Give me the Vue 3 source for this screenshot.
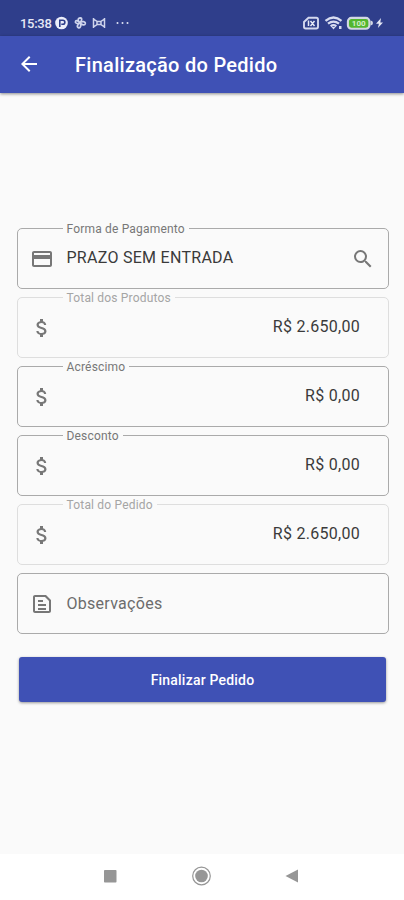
<script setup>
const fields = [
  { label: 'Forma de Pagamento', icon: 'card', text: 'PRAZO SEM ENTRADA', search: true },
  { label: 'Total dos Produtos', icon: 'money', amount: 'R$ 2.650,00', disabled: true },
  { label: 'Acréscimo', icon: 'money', amount: 'R$ 0,00' },
  { label: 'Desconto', icon: 'money', amount: 'R$ 0,00' },
  { label: 'Total do Pedido', icon: 'money', amount: 'R$ 2.650,00', disabled: true },
  { icon: 'note', placeholder: 'Observações' },
]

const icons = {
  card: 'M20 4H4c-1.11 0-1.99.89-1.99 2L2 18c0 1.11.89 2 2 2h16c1.11 0 2-.89 2-2V6c0-1.11-.89-2-2-2zm0 14H4v-6h16v6zm0-10H4V6h16v2z',
  money: 'M11.8 10.9c-2.27-.59-3-1.2-3-2.15 0-1.09 1.01-1.85 2.7-1.85 1.78 0 2.44.85 2.5 2.1h2.21c-.07-1.72-1.12-3.3-3.21-3.81V3h-3v2.16c-1.94.42-3.5 1.68-3.5 3.61 0 2.31 1.91 3.46 4.7 4.13 2.5.6 3 1.48 3 2.41 0 .69-.49 1.79-2.7 1.79-2.06 0-2.87-.92-2.98-2.1h-2.2c.12 2.19 1.76 3.42 3.68 3.83V21h3v-2.15c1.95-.37 3.5-1.5 3.5-3.55 0-2.84-2.43-3.81-4.7-4.4z',
  note: 'M8 16h8v2H8zm0-4h8v2H8zm0-4h5v2H8zM5 5v14h14V9l-4-4H5zM5 3h11l5 5v11c0 1.1-.9 2-2 2H5c-1.1 0-2-.9-2-2V5c0-1.1.9-2 2-2z',
}
</script>

<template>
  <div class="screen">
    <header class="status">
      <span class="clock">15:38</span>
      <svg class="notices" width="76" height="16" viewBox="0 0 76 16">
        <circle cx="6.500" cy="8" r="6.300" fill="#eceefa" />
        <path d="M4.800 12V5.200h3a2 2 0 0 1 0 4.100H6.300" fill="none" stroke="#2f3e8b" stroke-width="1.600" />
        <g fill="none" stroke="#cfd4ec" stroke-width="1.700">
          <path d="M25 7.500c-2.600-1-2.300-4.600.3-4.700 2.200.3 1.500 3-.3 4.700zM25 7.800c2-2.200 5.800-1.200 5.300 1-.6 2-3.600 1-5.300-1zM25 8c1.800 2.300.3 5.400-1.700 4.600-1.900-.8-.6-3.500 1.700-4.600zM25 8c-2.800 1.400-5.200-.1-4.500-1.700.8-1.500 3.400-.2 4.500 1.700z" />
          <path d="M38.500 3v10M49.500 3v10M38.500 4l3.500 2.500v3L38.500 12M49.500 4 46 6.500v3l3.500 2.500M42 6.500h4M42 9.500h4" stroke-width="1.500" />
        </g>
        <g fill="#dfe2f3"><circle cx="62.500" cy="8" r="1" /><circle cx="67.500" cy="8" r="1" /><circle cx="72.500" cy="8" r="1" /></g>
      </svg>
      <svg class="signals" width="82" height="16" viewBox="0 0 82 16">
        <path d="M6.500 2.700h7.800a1.700 1.700 0 0 1 1.700 1.700v7.400a1.700 1.700 0 0 1-1.700 1.700H3.700A1.700 1.700 0 0 1 2 11.800V7z" fill="none" stroke="#d3d7ee" stroke-width="1.900" />
        <path d="M6.500 5.500v5.500M8.500 6l4 5M12.500 6l-4 5" stroke="#e4e7f5" stroke-width="1.500" />
        <g fill="none" stroke="#d8dcf0" stroke-width="2.300">
          <path d="M23.500 5.800c5-4.100 11-4.100 16 0M26 8.700c3.500-2.700 7.500-2.700 11 0M28.700 11.300c1.600-1.300 4-1.300 5.600 0" />
        </g>
        <path d="M29.500 12h4L31.500 14.500zM37 11h2.500v3H37z" fill="#d8dcf0" />
        <rect x="45.900" y="2.900" width="21.500" height="10.800" rx="3.500" fill="#52b62f" stroke="#d2d7e3" stroke-width="2.100" />
        <path d="M68.500 5.500q2.500.2 2.500 2.500t-2.500 2.500z" fill="#d2d7e3" />
        <text x="56.700" y="11.200" text-anchor="middle" class="charge">100</text>
        <path d="M79 3l-5 5.800h2.900l-1 4.200L81 7.500h-2.700z" fill="#e4e7f5" />
      </svg>
    </header>

    <div class="appbar">
      <svg class="back" width="24" height="24" viewBox="0 0 24 24"><path d="M20 11H7.830l5.590-5.590L12 4l-8 8 8 8 1.410-1.410L7.830 13H20z" /></svg>
      <h1>Finalização do Pedido</h1>
    </div>

    <main>
      <div v-for="(f, i) in fields" :key="i" class="field" :class="{ disabled: f.disabled }">
        <span v-if="f.label" class="label">{{ f.label }}</span>
        <svg class="lead" width="24" height="24" viewBox="0 0 24 24"><path :d="icons[f.icon]" /></svg>
        <span v-if="f.text" class="text">{{ f.text }}</span>
        <span v-if="f.placeholder" class="placeholder">{{ f.placeholder }}</span>
        <span v-if="f.amount" class="amount">{{ f.amount }}</span>
        <svg v-if="f.search" class="search" width="24" height="24" viewBox="0 0 24 24"><path d="M15.500 14h-.79l-.28-.27A6.471 6.471 0 0 0 16 9.500 6.500 6.500 0 1 0 9.500 16c1.610 0 3.090-.59 4.230-1.570l.27.28v.79l5 4.990L20.490 19l-4.990-5zm-6 0C7.010 14 5 11.990 5 9.500S7.010 5 9.500 5 14 7.010 14 9.500 11.990 14 9.500 14z" /></svg>
      </div>
      <button class="submit">Finalizar Pedido</button>
    </main>

    <nav>
      <svg width="20" height="20" viewBox="0 0 20 20"><rect x="4" y="4" width="12.500" height="12.500" rx=".8" /></svg>
      <svg width="20" height="20" viewBox="0 0 20 20"><circle cx="10.500" cy="10" r="6.300" /><circle cx="10.500" cy="10" r="8.800" class="ring" /></svg>
      <svg width="20" height="20" viewBox="0 0 20 20"><path d="M3.500 10 16 3.500v13z" /></svg>
    </nav>
  </div>
</template>

<style>
body {
  background: #fafafa;
}
</style>

<style scoped>
.screen {
  height: 900px;
  display: flex;
  flex-direction: column;
  overflow: hidden;
  background: #fafafa;
  font-family: Roboto, "Liberation Sans", sans-serif;
}
.status {
  height: 36px;
  flex: none;
  box-sizing: border-box;
  display: flex;
  align-items: center;
  padding: 10px 20px 0;
  background: #2f3e8b;
}
.clock {
  width: 35px;
  font-size: 13px;
  font-weight: 500;
  letter-spacing: -0.3px;
  color: #e6e8f5;
}
.notices {
  flex: none;
}
.signals {
  flex: none;
  margin-left: auto;
}
.charge {
  font-size: 8px;
  font-weight: 700;
  fill: #d5efc9;
}
.appbar {
  height: 56.5px;
  flex: none;
  display: flex;
  align-items: center;
  background: #3f51b5;
  box-shadow: 0 1px 3px rgba(0, 0, 0, 0.45);
}
.back {
  margin-left: 17px;
  fill: #fff;
}
h1 {
  margin: 2px 0 0 34px;
  font-size: 20px;
  font-weight: 500;
  letter-spacing: 0.28px;
  color: #fff;
  white-space: nowrap;
}
main {
  flex: 1;
  display: flex;
  flex-direction: column;
  gap: 8px;
  padding: 135.5px 15px 0 16.5px;
}
.field {
  position: relative;
  box-sizing: border-box;
  height: 61px;
  flex: none;
  display: flex;
  align-items: center;
  padding: 0 28px 0 12px;
  border: 1px solid #aaa;
  border-radius: 5px;
  font-size: 16px;
  letter-spacing: 0.28px;
  color: #3a3a3a;
}
.disabled {
  border-color: #dedede;
}
.label {
  position: absolute;
  left: 45px;
  top: -8px;
  padding: 0 4px;
  background: #fafafa;
  font-size: 12px;
  line-height: 16px;
  letter-spacing: 0.18px;
  color: #777;
  white-space: nowrap;
}
.disabled .label {
  color: #a5a5a5;
}
.lead {
  flex: none;
  margin-right: 13px;
  fill: #777;
}
.text,
.amount {
  padding-bottom: 2px;
}
.placeholder {
  color: #6c6c6c;
}
.amount {
  margin-left: auto;
}
.search {
  margin: 0 -15px 0 auto;
  fill: #777;
}
.submit {
  height: 45px;
  margin: 15px 3px 0 2.5px;
  padding: 0;
  border: 0;
  border-radius: 3px;
  background: #3f51b5;
  box-shadow: 0 1px 3px rgba(0, 0, 0, 0.4);
  font: 500 14px Roboto, "Liberation Sans", sans-serif;
  letter-spacing: 0.2px;
  color: #fff;
}
nav {
  height: 46px;
  flex: none;
  box-sizing: border-box;
  display: flex;
  justify-content: space-between;
  align-items: center;
  padding: 0 102px 2px 100px;
  background: #fff;
}
nav svg {
  fill: #969696;
}
nav .ring {
  fill: none;
  stroke: #969696;
  stroke-width: 1.2;
}
</style>
